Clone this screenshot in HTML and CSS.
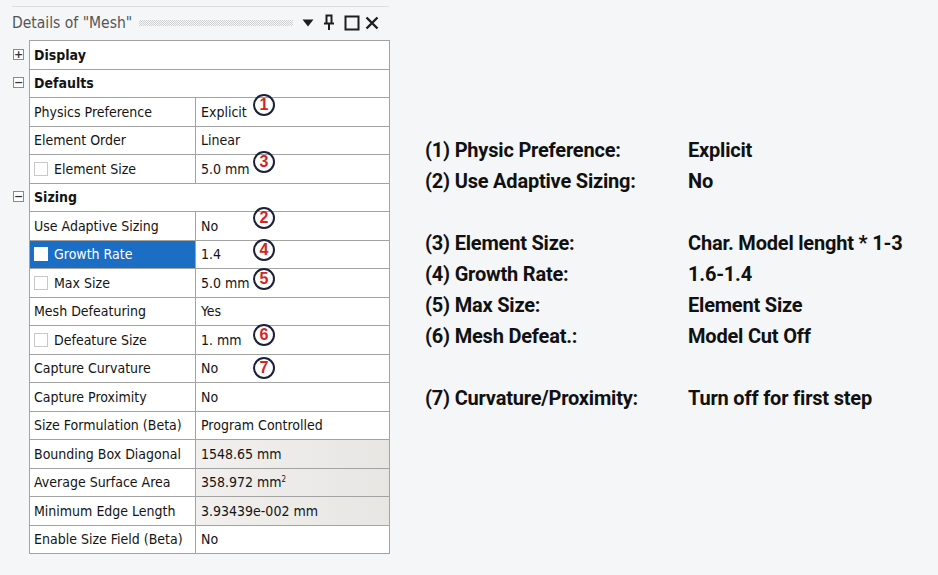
FILE: index.html
```html
<!DOCTYPE html>
<html lang="en">
<head>
    <meta charset="UTF-8">
    <title>Details of "Mesh"</title>
    <link rel="stylesheet" href="styles.css">
</head>
<body>

<div class="page">
    <div class="panel">
        <div class="titlebar">
            <span class="title">Details of "Mesh"</span>
            <span class="grip"></span>
            <span class="tb-icons">
                <svg width="12" height="10" viewBox="0 0 12 10"><path d="M0.5 1.5 L11.5 1.5 L6 8.5 Z" fill="#1e1e1e"/></svg>
                <svg width="12" height="17" viewBox="0 0 12 17"><path d="M3.5 1.5 H8.5 V9.5 H3.5 Z M1 9.5 H11 M6 9.5 V16" stroke="#1e1e1e" stroke-width="2" fill="none"/></svg>
                <svg width="16" height="16" viewBox="0 0 16 16"><rect x="1.5" y="1.5" width="13" height="13" stroke="#1e1e1e" stroke-width="2" fill="none"/></svg>
                <svg class="close" width="14" height="14" viewBox="0 0 14 14"><path d="M1.5 1.5 L12.5 12.5 M12.5 1.5 L1.5 12.5" stroke="#1e1e1e" stroke-width="2.4"/></svg>
            </span>
        </div>

        <div class="grid">
            <div class="row">
                <div class="tog"><span class="box">+</span></div>
                <div class="group">Display</div>
            </div>
            <div class="row">
                <div class="tog"><span class="box">&minus;</span></div>
                <div class="group">Defaults</div>
            </div>
            <div class="row">
                <div class="tog"></div>
                <div class="name">Physics Preference</div>
                <div class="val">Explicit <span class="mark c1">1</span></div>
            </div>
            <div class="row">
                <div class="tog"></div>
                <div class="name">Element Order</div>
                <div class="val">Linear</div>
            </div>
            <div class="row">
                <div class="tog"></div>
                <div class="name"><span class="chk"></span>Element Size</div>
                <div class="val">5.0 mm <span class="mark c3">3</span></div>
            </div>
            <div class="row">
                <div class="tog"><span class="box">&minus;</span></div>
                <div class="group">Sizing</div>
            </div>
            <div class="row">
                <div class="tog"></div>
                <div class="name">Use Adaptive Sizing</div>
                <div class="val">No <span class="mark c2">2</span></div>
            </div>
            <div class="row">
                <div class="tog"></div>
                <div class="name selected"><span class="chk"></span>Growth Rate</div>
                <div class="val">1.4 <span class="mark c4">4</span></div>
            </div>
            <div class="row">
                <div class="tog"></div>
                <div class="name"><span class="chk"></span>Max Size</div>
                <div class="val">5.0 mm <span class="mark c5">5</span></div>
            </div>
            <div class="row">
                <div class="tog"></div>
                <div class="name">Mesh Defeaturing</div>
                <div class="val">Yes</div>
            </div>
            <div class="row">
                <div class="tog"></div>
                <div class="name"><span class="chk"></span>Defeature Size</div>
                <div class="val">1. mm <span class="mark c6">6</span></div>
            </div>
            <div class="row">
                <div class="tog"></div>
                <div class="name">Capture Curvature</div>
                <div class="val">No <span class="mark c7">7</span></div>
            </div>
            <div class="row">
                <div class="tog"></div>
                <div class="name">Capture Proximity</div>
                <div class="val">No</div>
            </div>
            <div class="row">
                <div class="tog"></div>
                <div class="name">Size Formulation (Beta)</div>
                <div class="val">Program Controlled</div>
            </div>
            <div class="row">
                <div class="tog"></div>
                <div class="name">Bounding Box Diagonal</div>
                <div class="val ro">1548.65 mm</div>
            </div>
            <div class="row">
                <div class="tog"></div>
                <div class="name">Average Surface Area</div>
                <div class="val ro">358.972 mm<sup>2</sup></div>
            </div>
            <div class="row">
                <div class="tog"></div>
                <div class="name">Minimum Edge Length</div>
                <div class="val ro">3.93439e-002 mm</div>
            </div>
            <div class="row last">
                <div class="tog"></div>
                <div class="name">Enable Size Field (Beta)</div>
                <div class="val">No</div>
            </div>
        </div>
    </div>

    <div class="notes">
        <p>(1) Physic Preference:</p><p>Explicit</p>
        <p>(2) Use Adaptive Sizing:</p><p>No</p>
        <p class="gap"></p><p class="gap"></p>
        <p>(3) Element Size:</p><p>Char. Model lenght * 1-3</p>
        <p>(4) Growth Rate:</p><p>1.6-1.4</p>
        <p>(5) Max Size:</p><p>Element Size</p>
        <p>(6) Mesh Defeat.:</p><p>Model Cut Off</p>
        <p class="gap"></p><p class="gap"></p>
        <p>(7) Curvature/Proximity:</p><p>Turn off for first step</p>
    </div>
</div>

</body>
</html>
```

FILE: styles.css
```css
* {
    margin: 0;
    padding: 0;
    box-sizing: border-box;
}

body {
    background: #f4f6f8;
    font-family: "DejaVu Sans Condensed", "Liberation Sans", sans-serif;
    color: #141414;
}

.page {
    display: flex;
    width: 938px;
    height: 575px;
}

.panel {
    width: 377px;
    margin-left: 12px;
    margin-top: 6px;
    border-top: 1px solid #dcdee0;
}

.titlebar {
    height: 33px;
    display: flex;
    align-items: center;
    padding-bottom: 2px;
}

.title {
    font-size: 15.5px;
    color: #555555;
}

.grip {
    flex: 1;
    height: 6px;
    margin: 0 9px 0 7px;
    background-image: repeating-conic-gradient(#cfd1d3 0 25%, transparent 0 50%);
    background-size: 2px 2px;
}

.tb-icons {
    display: flex;
    align-items: center;
    gap: 9px;
    margin-right: 10px;
}

.tb-icons .close {
    margin-left: -4px;
}

.grid {
    border-bottom: 1px solid #a3a3a3;
    margin-left: 17px;
    margin-right: -1px;
}

.row {
    display: grid;
    grid-template-columns: 166px 1fr;
    height: 28.5px;
    font-size: 14px;
    position: relative;
}

.tog {
    position: absolute;
    left: -17px;
    top: 0;
    width: 17px;
    height: 100%;
    display: flex;
    align-items: center;
}

.box {
    display: block;
    width: 11px;
    height: 11px;
    margin-left: 1px;
    border: 1px solid #8a8a8a;
    background: #ffffff;
    font-size: 11px;
    line-height: 9px;
    text-align: center;
    font-weight: bold;
    color: #333333;
    font-family: "DejaVu Sans", sans-serif;
}

.group,
.name,
.val {
    border-top: 1px solid #a3a3a3;
    border-left: 1px solid #a3a3a3;
    background: #ffffff;
    display: flex;
    align-items: center;
    white-space: nowrap;
}

.group {
    grid-column: 1 / 3;
    border-right: 1px solid #a3a3a3;
    padding-left: 4px;
    font-weight: bold;
}

.name {
    padding-left: 4px;
}

.val {
    padding-left: 5px;
    border-right: 1px solid #a3a3a3;
    position: relative;
}

.val.ro {
    background: linear-gradient(to right, #f1f0ee, #e8e6e3);
}

.val sup {
    font-size: 8px;
    align-self: flex-start;
    margin-top: 6px;
}

.chk {
    display: inline-block;
    width: 14px;
    height: 14px;
    border: 1px solid #c9c9c9;
    background: #ffffff;
    margin-right: 6px;
}

.name.selected {
    background: #1c6ec4;
    color: #ffffff;
}

.name.selected .chk {
    border-color: #ffffff;
}

.mark {
    position: absolute;
    left: 57px;
    width: 22px;
    height: 22px;
    border: 2px solid #1b2138;
    border-radius: 50%;
    color: #d42424;
    font-weight: bold;
    font-size: 16px;
    line-height: 18px;
    text-align: center;
    font-family: "Liberation Sans", sans-serif;
}

.c1 { top: -4px; }
.c3 { top: -4px; }
.c2 { top: -5px; }
.c4 { top: -2px; }
.c5 { top: -1px; }
.c6 { top: -2px; }
.c7 { top: 2px; }

.notes {
    margin-left: 36px;
    padding-top: 135px;
    display: grid;
    grid-template-columns: 263px 1fr;
    grid-auto-rows: 31px;
    align-content: start;
    font-family: Roboto, "Liberation Sans", sans-serif;
    font-weight: 700;
    font-size: 20px;
    letter-spacing: -0.2px;
    color: #111111;
}

.notes p {
    line-height: 31px;
    white-space: nowrap;
}
```
